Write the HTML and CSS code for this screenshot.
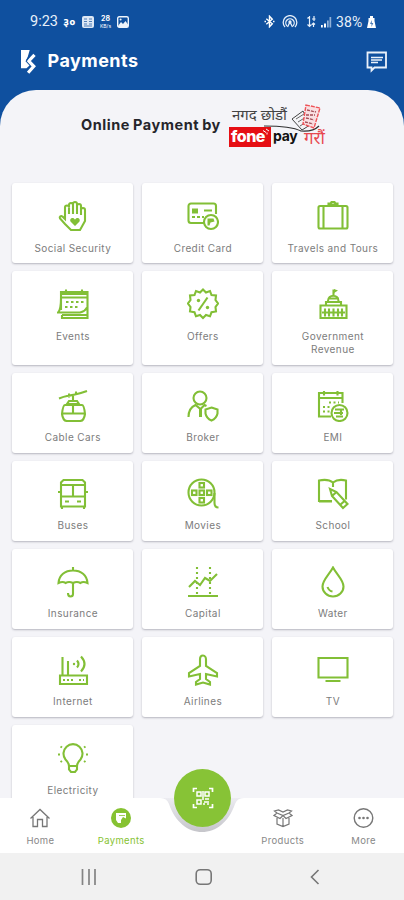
FILE: index.html
```html
<!DOCTYPE html>
<html lang="en">
<head>
<meta charset="utf-8">
<title>Payments</title>
<link rel="stylesheet" href="styles.css">
</head>
<body>
<div class="phone">
  <header class="top">
    <div class="status">
      <span class="clock">9:23</span>
      <span class="deva-mini">३०</span>
      <svg class="s-news" width="12" height="12" viewBox="0 0 12 12"><rect width="12" height="12" rx="2" fill="#dce7f5"/><path d="M2 3h3M2 5.500h3M2 8h3M7 3h3M7 5.500h3M7 8h3M2 10h8" stroke="#4f7db7"/></svg>
      <span class="net"><b>28</b><i>KB/s</i></span>
      <svg class="s-pic" width="12" height="12" viewBox="0 0 12 12"><rect x=".7" y=".7" width="10.600" height="10.600" rx="1.500" fill="none" stroke="#eef4fb" stroke-width="1.400"/><path d="M1 10l3-4 2 2 2.500-3L11 8.500V11H1z" fill="#eef4fb"/><circle cx="3.600" cy="3.600" r="1" fill="#eef4fb"/></svg>
      <span class="grow"></span>
      <svg class="s-bt" width="11" height="13" viewBox="0 0 11 13" fill="none" stroke="#fff" stroke-width="1.400"><path d="M2.300 3.800l6 5-2.800 3V1.200l2.800 3-6 5"/><path d="M.5 6.500h1.500M9 6.500h1.500"/></svg>
      <svg class="s-hot" width="16" height="13" viewBox="0 0 16 13" fill="none" stroke="#e8f0fa" stroke-width="1.300"><path d="M3 12A6.800 6.800 0 1 1 13 12M5 11A4.200 4.200 0 1 1 11 11"/><path d="M8 7l-2.500 5M8 7l2.500 5"/><circle cx="8" cy="7" r="1" fill="#fff"/></svg>
      <svg class="s-4g" width="9" height="13" viewBox="0 0 9 13" fill="none" stroke="#e8f0fa" stroke-width="1.200"><path d="M2.500 1v11M.5 3.500l2-2M.5 9.500l2 2 2-2M7 1v5M5 4h3.500M6.500 8v4M5 9.500l1.500-1.500L8 9.500"/></svg>
      <svg class="s-sig" width="12" height="12" viewBox="0 0 12 12"><path d="M1 9h1.800v2.500H1zM4 7.500h2v4H4z" fill="#fff"/><path d="M7 4.500h1.700v7H7zM9.500 1h1.700v10.500H9.500z" fill="#8fb0d8"/></svg>
      <span class="pct">38%</span>
      <svg class="s-bat" width="9" height="12" viewBox="0 0 9 12"><path d="M3 0h3v2h1.500v3L9 12H0l1.500-7V2H3z" fill="#fff"/><path d="M4.800 4L3 8h1.500v3L6.300 7H4.800z" fill="#4b7cb8"/></svg>
    </div>
    <div class="bar">
      <svg class="brand" width="15" height="25" viewBox="0 0 15 25"><path d="M0 0h8.700L6.700 7l-2.200 4.200 4 4.300-3 2.800H0z" fill="#fff"/><path d="M13.500 4.800L7.800 11l5 5.300-5.700 6.500" fill="none" stroke="#fff" stroke-width="3.200"/><path d="M10.200 3L5.500 10.800" stroke="#0f509f" stroke-width="1.200"/></svg>
      <h1>Payments</h1>
      <svg class="chat" width="22" height="22" viewBox="0 0 22 22" fill="none" stroke="#eaf1fa"><path d="M1.500 1.500h18.500v15H8.500l-3 3v-3h-4z" stroke-width="1.800"/><path d="M5 6.500h12M5 9h11M5 11.500h7" stroke-width="1.700"/></svg>
    </div>
  </header>
  <main class="sheet">
    <div class="promo">
      <span class="promo-text">Online Payment by</span>
      <div class="fonepay">
        <div class="slogan"><span>नगद छोडौं</span></div>
        <div class="marks"><span class="fone">fone</span><span class="pay">pay</span><span class="garau">गरौं</span></div>
        <svg class="notes" width="98" height="42" viewBox="0 0 98 42" fill="none"><path d="M35 22Q62 22 72 27Q84 28 90 22" stroke="#333" stroke-width="1.200"/><path d="M63 15l11-8 7 14-8 5z" stroke="#444" stroke-width="1" fill="#f4f4f7"/><path d="M67 15l8-5M69 18l8-5M71 22l8-5" stroke="#666"/><path d="M77 1l14 3-6 20-11-4z" stroke="#ee5358" stroke-width="1.400" stroke-dasharray="4 1" fill="#f9dfe2"/><path d="M78 6l9 2M77 11h9M77 14l8 2M76 18l8 2" stroke="#a54e57" stroke-width="1.300" stroke-dasharray="3 1"/><path d="M34 26.500l3 2M37 25l3 2M38 28.500v2" stroke="#fff"/></svg>
      </div>
    </div>
    <div class="grid">
      <div class="card"><svg viewBox="0 0 32 32"><path d="M8 19V7.500a2 2 0 0 1 4 0V5a2 2 0 0 1 4 0V4a2 2 0 0 1 4 0v2a2 2 0 0 1 4 0v4a2 2 0 0 1 4 0v11l-5 9H14l-6-6-5-5.500c-1-2 1-3 2.500-2z"/><path d="M12 7.500V14M16 5v9M20 6v8M24 10v5"/><path class="f" d="M18 26l-4.500-4.500c-1.500-3 3-5 4.500-1.700 1.500-3.300 6-1.300 4.500 1.700z"/></svg><span>Social Security</span></div>
      <div class="card"><svg viewBox="0 0 32 32"><path d="M17 23H4a2.500 2.500 0 0 1-2.500-2.500V6A2.500 2.500 0 0 1 4 3.500h22.500A2.500 2.500 0 0 1 29 6v8M17 10.500h8M5 17h3M10 17h3M15 17h2"/><path class="f" d="M5 8.500h6v5H5z"/><circle cx="24" cy="22" r="7"/><path class="f" d="M20.500 18.500h6l1 3-4 1-1 3h-2z"/></svg><span>Credit Card</span></div>
      <div class="card"><svg viewBox="0 0 32 32"><rect x="1.500" y="6" width="29" height="22.500" rx="1.500"/><path d="M6.500 6v22M25.500 6v22M11.500 6V3.500h2l1-1.500h3l1 1.500h2V6M12 4.500h8"/></svg><span>Travels and Tours</span></div>
      <div class="card"><svg viewBox="0 0 32 32"><path d="M4 22V4h26.500v26H5v-3M4 9.500h26M4 6h26M9 1.500v5M25 1.500v5M4 10q0 12-3 14.500h22q5-1 7-5M5 27h25"/><path stroke-dasharray="2.500 2.500" d="M9 14h18M8 19h13"/></svg><span>Events</span></div>
      <div class="card"><svg viewBox="0 0 32 32"><path d="M16 1.500l3 3 4-1.500 1.500 4 4.500.500-.5 4.500 2.500 3.500-2.500 3.500.5 4.500-4.500.800-1.500 4-4-1.300-3 3-3-3-4 1.300-1.500-4-4.500-.800.5-4.500L1 15.500 3.500 12 3 7.500l4.500-.5L9 3l4 1.500z"/><path d="M20.500 9.500l-9 13"/><circle class="f" cx="11.500" cy="12.500" r="1.700"/><circle class="f" cx="20.500" cy="19.500" r="1.700"/></svg><span>Offers</span></div>
      <div class="card"><svg viewBox="0 0 32 32"><path d="M3.500 17.500h26V30h-26zM9 17v-3h15v3M11 13c0-7 10.500-7 10.500 0M16.500 8V1.500M11 10.500h11"/><path d="M8 20.500v8M12 20.500v8M16.500 20.500v8M21 20.500v8M25 20.500v8M5 24.500h23"/><path class="f" d="M17 1l4 1.500L17 5z"/></svg><span>Government Revenue</span></div>
      <div class="card"><svg viewBox="0 0 32 32"><path d="M2 8.500q5-2 8-2.500t8-1.500T30 1M12 3.500v4M19 1.500v4M16 6v5M12 11h8l2 3H10zM8 15h17q2 0 3 9-1 7-5 7H10q-4 0-5-7 1-9 3-9zM5 23.500h22M16 15v8"/></svg><span>Cable Cars</span></div>
      <div class="card"><svg viewBox="0 0 32 32"><circle cx="13" cy="8" r="6.500"/><path d="M1.500 27q0-9 7-12l5 4 4-4 2 1"/><path class="f" d="M12 19h3v8h-3z"/><path d="M24.500 17.500l6 2v4q-1 5-6 7-5-2-6-7v-4z"/></svg><span>Broker</span></div>
      <div class="card"><svg viewBox="0 0 32 32"><path d="M14 26.500H2V3h23.500v10M2 8h23M7 1v4.500M20.500 1v4.500"/><path stroke-dasharray="2 2.500" d="M12 12.500h10M6 17h9M6 21.500h7"/><circle cx="22.500" cy="23" r="8"/><path d="M18 19.500h9M17 23h9M19 26.500h7M24 19v6"/></svg><span>EMI</span></div>
      <div class="card"><svg viewBox="0 0 32 32"><path d="M4 28.500V4.500L6.500 2h19L28 4.500v24zM4 7h24M4 18.500h24M16 7v11M1 14h2M29 14h2M5 29v2M27 29v2M8 23.500h4M20 23.500h4"/></svg><span>Buses</span></div>
      <div class="card"><svg viewBox="0 0 32 32"><path d="M27.500 15v10q0 4.500 4 4.500"/><circle cx="14.500" cy="14.500" r="13"/><rect x="12.500" y="5" width="4.500" height="4.500"/><rect x="5" y="12.500" width="4.500" height="4.500"/><rect x="12.500" y="12.500" width="4.500" height="4.500"/><rect x="20" y="12.500" width="4.500" height="4.500"/><rect x="12.500" y="20" width="4.500" height="4.500"/></svg><span>Movies</span></div>
      <div class="card"><svg viewBox="0 0 32 32"><path d="M15 23H2V2.500q9-2 14 2 5-4 13-2v19M16 4.500V9M2 23.500h13"/><path d="M13 11l2 7 11 12 4.500-4-11-12zM15 18l4.500-4M23 27l4.500-4"/></svg><span>School</span></div>
      <div class="card"><svg viewBox="0 0 32 32"><path d="M16 1v3M1.500 17C2 9 8 4.500 16 4.500S30 9 30.500 17q-4.500-2-7 0-3.500-2-7.500 0-4-2-7.500 0-2.500-2-7 0zM16 17v11q0 2.500-2.500 2.500T11 27"/></svg><span>Insurance</span></div>
      <div class="card"><svg viewBox="0 0 32 32"><path d="M2 21l6-6 5 4 5-7 5 3 7-7M1 30h30"/><path stroke-dasharray="2 3" d="M10 1v27M23 1v27"/></svg><span>Capital</span></div>
      <div class="card"><svg viewBox="0 0 32 32"><path d="M16 1.500C12 9 5.500 14 5.500 20.500a10.500 10 0 0 0 21 0C26.500 14 20 9 16 1.500zM10.500 21q1.500 4 5 4.500"/></svg><span>Water</span></div>
      <div class="card"><svg viewBox="0 0 32 32"><path d="M3 21.500h27V30H3zM5.500 3v18M11 7v14"/><path stroke-dasharray="2 2" d="M6 26h12M22 26h5"/><circle class="f" cx="17" cy="10" r="1.200"/><path d="M20 6.500q3 3.500 0 7M24 2.500q7 7.500 0 15"/></svg><span>Internet</span></div>
      <div class="card"><svg viewBox="0 0 32 32"><path d="M16 1.500c-2 0-3 2-3 4V12L2 19v3.500l11-2.500v5l-4 3v2.500l7-2 7 2V28l-4-3v-5l11 2.500V19l-11-7V5.500c0-2-1-4-3-4z"/></svg><span>Airlines</span></div>
      <div class="card"><svg viewBox="0 0 32 32"><path d="M1.500 4h29v19.500h-29zM8.500 27h15"/></svg><span>TV</span></div>
      <div class="card"><svg viewBox="0 0 32 32"><path d="M12 24q0-3-3.500-6.500A9.500 9.500 0 1 1 23.500 17.500Q20 21 20 24zM12 24v3.500l2 2.500h4l2-2.500V24"/><path d="M1 12.500h2M29 12.500h2M3.500 4.500l1.500 1M28.500 4.500l-1.500 1M3.500 20l1.500-1M28.500 20l-1.500-1"/></svg><span>Electricity</span></div>
    </div>
  </main>
  <nav class="tabs">
    <svg class="notch" width="404" height="62" viewBox="0 0 404 62"><defs><linearGradient id="halo" x1="0" y1="0" x2="0" y2="1"><stop offset="0" stop-color="#ececf1"/><stop offset="1" stop-color="#c3c3c8"/></linearGradient></defs><path d="M160 7h84v36h-84z" fill="url(#halo)"/><path d="M0 7H160Q167 7 169 13C175 31 188 41 202 41S229 31 235 13Q237 7 244 7H404V62H0z" fill="#fff"/></svg>
    <div class="tab"><svg width="22" height="20" viewBox="0 0 22 20" fill="none" stroke="#777" stroke-width="1.300"><path d="M1.500 10.500L11 1.500l9.500 9M4 9v9.500h4.500v-7h5v7H18V9"/></svg><span>Home</span></div>
    <div class="tab on"><svg width="20" height="20" viewBox="0 0 20 20"><circle cx="10" cy="10" r="10" fill="#86c232"/><path d="M5 5h10v5.500l-3-1.500-2 3v3H7l-2-3z" fill="#fff"/><path d="M8 7.500h6" stroke="#86c232" stroke-width=".8"/></svg><span>Payments</span></div>
    <div class="tab mid"></div>
    <div class="tab"><svg width="20" height="20" viewBox="0 0 20 20" fill="none" stroke="#777" stroke-width="1.200"><path d="M4 10v6l6 2.500 6-2.500v-6M10 10v8.500M4 5l6 2.500L16 5M4 5L1 7.500l6 3 3-3 3 3 6-3L16 5M4 5L1.500 3l4-1L10 4l4.500-2 4 1L16 5"/></svg><span>Products</span></div>
    <div class="tab"><svg width="21" height="20" viewBox="0 0 21 20"><circle cx="10.500" cy="10" r="9.300" fill="none" stroke="#777" stroke-width="1.400"/><g fill="#777"><circle cx="6.500" cy="10" r="1.300"/><circle cx="10.500" cy="10" r="1.300"/><circle cx="14.500" cy="10" r="1.300"/></g></svg><span>More</span></div>
    <div class="scan"><svg width="22" height="22" viewBox="0 0 22 22" fill="none" stroke="#fff" stroke-width="1.700"><path d="M1.500 5V1.500H5M17 1.500h3.500V5M1.500 17v3.500H5M17 20.500h3.500V17"/><path d="M5 5h4v4H5zM13 5h4v4h-4zM5 13h4v4H5zM11 4v9M13 12h4M12 15h3M16 14v4M11 17h2" stroke-width="1.500"/></svg></div>
  </nav>
  <footer class="sys">
    <svg width="16" height="16" viewBox="0 0 16 16"><path d="M1.500 0v16M8 0v16M14 0v16" stroke="#848484" stroke-width="1.700"/></svg>
    <svg width="18" height="18" viewBox="0 0 18 18"><rect x="1.200" y="1.700" width="15" height="14.600" rx="4" fill="none" stroke="#777" stroke-width="1.600"/></svg>
    <svg width="10" height="16" viewBox="0 0 10 16"><path d="M8.500 1L1.500 8l7 7" fill="none" stroke="#777" stroke-width="1.600"/></svg>
  </footer>
</div>
</body>
</html>
```
FILE: styles.css
```css
* { box-sizing: border-box; }
body { margin: 0; font-family: Inter, "Noto Sans", sans-serif; }
.phone { width: 404px; height: 900px; overflow: hidden; display: flex; flex-direction: column; background: #0f509f; }
.phone svg { display: block; flex: none; }

.top { height: 90px; flex: none; color: #fff; }
.status { height: 42px; padding: 1px 28px 0 30px; display: flex; align-items: center; }
.clock { width: 28px; font: 14.5px/16px Roboto, sans-serif; white-space: nowrap; color: #e8f0fa; }
.deva-mini { margin-left: 5px; width: 13px; font: bold 11px/14px "Noto Sans", sans-serif; white-space: nowrap; }
.s-news { margin-left: 6px; }
.net { margin-left: 4px; width: 15px; display: flex; flex-direction: column; align-items: center; font-size: 7px; line-height: 8px; }
.net i { font-size: 5px; font-style: normal; line-height: 6px; }
.s-pic { margin-left: 4px; }
.grow { flex: 1; }
.s-hot { margin-left: 7px; }
.s-4g { margin-left: 9px; }
.s-sig { margin-left: 4px; }
.pct { margin-left: 4px; width: 29px; font: 14px/16px Roboto, sans-serif; color: #e8f0fa; letter-spacing: .1px; white-space: nowrap; }
.s-bat { margin-left: 2px; }
.bar { height: 40px; padding: 0 16px 0 21px; display: flex; align-items: center; }
.bar h1 { margin: -2px 0 0 11.5px; font-size: 18px; line-height: 24px; font-weight: 700; flex: 1; letter-spacing: .45px; }

.sheet { flex: 1; min-height: 0; overflow: hidden; background: #f4f4f8; border-radius: 36px 36px 0 0; }
.promo { height: 93px; padding: 14px 0 0 81px; display: flex; }
.promo-text { width: 148px; padding-top: 11px; font-size: 14.5px; line-height: 20px; font-weight: 700; letter-spacing: .55px; word-spacing: -1px; color: #25252b; white-space: nowrap; }
.fonepay { width: 98px; height: 42px; position: relative; }
.slogan { height: 23px; padding-left: 3px; font: 15px/20px "Noto Sans", sans-serif; color: #444; white-space: nowrap; }
.marks { display: flex; height: 20px; font-weight: 800; }
.fone { width: 42px; padding-left: 2px; background: #e60f14; color: #fff; font-size: 16px; line-height: 19px; letter-spacing: -.5px; }
.pay { width: 33px; padding-left: 2px; color: #111; font-size: 14px; line-height: 18px; letter-spacing: -.3px; font-weight: 700; }
.garau { font: 17px/22px "Noto Sans", sans-serif; color: #e8484e; white-space: nowrap; }
.notes { position: absolute; left: 0; top: 0; }

.grid { display: grid; grid-template-columns: repeat(3, 121px); grid-template-rows: 80px 93.5px repeat(5, 80px); gap: 8.1px 9px; padding: 0 12.4px; }
.card { background: #fff; border-radius: 3px; box-shadow: 0 1px 2px rgba(40, 40, 60, .3); padding-top: 17px; display: flex; flex-direction: column; align-items: center; }
.card svg { width: 32px; height: 32px; fill: none; stroke: #82bf36; stroke-width: 2.1; }
.card .f { fill: #82bf36; stroke: none; }
.card span { margin-top: 9.5px; max-width: 86px; font-size: 10px; line-height: 13px; letter-spacing: .4px; color: #7c7c7c; text-align: center; }
.card:nth-child(3) span { max-width: none; }

.tabs { height: 62px; flex: none; margin-top: -62px; position: relative; display: flex; padding-top: 17px; }
.notch { position: absolute; left: 0; top: 0; }
.tab { position: relative; width: 81px; display: flex; flex-direction: column; align-items: center; font-size: 9.5px; letter-spacing: .35px; color: #888; }
.tab span { margin-top: 6px; line-height: 13px; }
.on { color: #86c232; }
.scan { position: absolute; left: 174px; top: -22px; width: 57px; height: 58px; border-radius: 50%; background: #87c336; display: flex; align-items: center; justify-content: center; }
.sys { height: 47px; flex: none; background: #f1f1f1; display: flex; align-items: center; justify-content: space-between; padding: 0 84px 0 81px; }
```
